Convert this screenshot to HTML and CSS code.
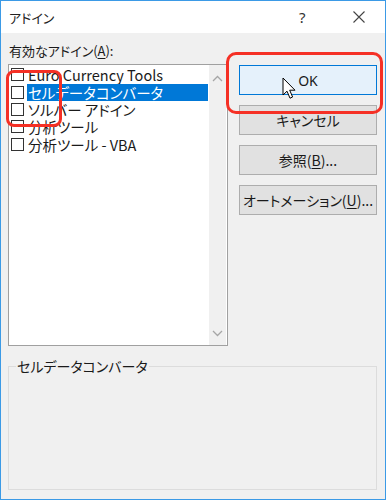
FILE: index.html
```html
<!DOCTYPE html>
<html lang="ja">
<head>
<meta charset="utf-8">
<title>アドイン</title>
<link rel="stylesheet" href="styles.css">
</head>
<body>
<div class="window">
  <div class="titlebar">
    <span class="title">アドイン</span>
    <span class="help">?</span>
    <span class="close">
      <svg width="12" height="12" viewBox="0 0 12 12"><path d="M0.5 0.5 L11.5 11.5 M11.5 0.5 L0.5 11.5" stroke="#444" stroke-width="1.1" fill="none"/></svg>
    </span>
  </div>
  <div class="body">
    <div class="top">
      <div class="left">
        <div class="label">有効なアドイン(<u>A</u>):</div>
        <div class="listbox">
          <ul class="items">
            <li class="item"><span class="check"></span><span class="text">Euro Currency Tools</span></li>
            <li class="item selected"><span class="check"></span><span class="text">セルデータコンバータ</span></li>
            <li class="item"><span class="check"></span><span class="text">ソルバー アドイン</span></li>
            <li class="item"><span class="check"></span><span class="text">分析ツール</span></li>
            <li class="item"><span class="check"></span><span class="text">分析ツール - VBA</span></li>
          </ul>
          <div class="scrollbar">
            <svg class="arrow" width="11" height="7" viewBox="0 0 11 7"><path d="M1 6 L5.5 1.5 L10 6" stroke="#a6a6a6" stroke-width="1.3" fill="none"/></svg>
            <svg class="arrow" width="11" height="7" viewBox="0 0 11 7"><path d="M1 1 L5.5 5.5 L10 1" stroke="#a6a6a6" stroke-width="1.3" fill="none"/></svg>
          </div>
        </div>
      </div>
      <div class="buttons">
        <div class="btn default">OK</div>
        <div class="btn">キャンセル</div>
        <div class="btn">参照(<u>B</u>)...</div>
        <div class="btn">オートメーション(<u>U</u>)...</div>
      </div>
    </div>
    <fieldset class="group">
      <legend class="legend">セルデータコンバータ</legend>
    </fieldset>
  </div>
  <div class="mark mark-checks"></div>
  <div class="mark mark-ok"></div>
  <svg class="cursor" width="15" height="23" viewBox="0 0 15 23"><path d="M1 1 L1 18 L5 14.2 L8 21.2 L10.6 20 L7.7 13.2 L13 13.2 Z" fill="#fff" stroke="#000" stroke-width="1" stroke-linejoin="round"/></svg>
</div>
</body>
</html>
```
FILE: styles.css
```css
* { box-sizing: border-box; }
html, body { margin: 0; padding: 0; }
body {
  width: 386px;
  height: 500px;
  overflow: hidden;
  font-family: "Noto Sans CJK JP", "Noto Sans", sans-serif;
  font-feature-settings: "palt";
  color: #1a1a1a;
}
.window {
  position: relative;
  width: 386px;
  height: 500px;
  border: 1px solid #3b9ae6;
  background: #f0f0f0;
  display: flex;
  flex-direction: column;
}
.titlebar {
  height: 32px;
  background: #fff;
  display: flex;
  align-items: center;
  padding-left: 8px;
  flex-shrink: 0;
}
.title {
  font-size: 13px;
  flex: 1;
  color: #222;
}
.help {
  font-size: 15px;
  color: #333;
  width: 12px;
  margin-right: 42px;
  font-family: "Noto Sans", sans-serif;
}
.close {
  display: flex;
  margin-right: 20px;
}
.body {
  flex: 1;
  padding: 9px 7px 0 7px;
  display: flex;
  flex-direction: column;
}
.top {
  display: flex;
  gap: 11px;
}
.left {
  width: 220px;
  display: flex;
  flex-direction: column;
}
.label {
  font-size: 13px;
  height: 22px;
  line-height: 18px;
  padding-left: 1px;
}
.label u, .btn u { text-decoration-thickness: 1px; text-underline-offset: 2px; }
.listbox {
  height: 282px;
  border: 1px solid #a0a0a0;
  background: #fff;
  display: flex;
}
.items {
  list-style: none;
  margin: 0;
  padding: 1px 0 0 0;
  flex: 1;
}
.item {
  height: 17.4px;
  display: flex;
  align-items: center;
  font-size: 14.5px;
}
.check {
  width: 13px;
  height: 13px;
  border: 1px solid #333;
  background: #fff;
  margin-left: 2px;
  flex-shrink: 0;
}
.text {
  margin-left: 3px;
  padding-left: 1px;
  height: 17px;
  line-height: 17px;
  flex: 1;
  margin-right: 1px;
  white-space: nowrap;
}
.selected .text {
  background: #0078d7;
  color: #fff;
}
.scrollbar {
  width: 17px;
  margin-right: 1px;
  background: #f0f0f0;
  display: flex;
  flex-direction: column;
  justify-content: space-between;
  align-items: center;
  padding: 10px 0 8px;
}
.buttons {
  display: flex;
  flex-direction: column;
  gap: 10px;
  padding-top: 23px;
}
.btn {
  width: 138px;
  height: 30px;
  background: #e1e1e1;
  border: 1px solid #adadad;
  display: flex;
  align-items: center;
  justify-content: center;
  font-size: 14px;
}
.btn.default {
  background: #e5f1fb;
  border-color: #0078d7;
  font-family: "Noto Sans", sans-serif;
}
.group {
  margin: 13px 0 0 0;
  height: 131px;
  width: 369px;
  border: 1px solid #dcdcdc;
  padding: 0 7px;
}
.legend {
  font-size: 14px;
  padding: 0 1px;
  line-height: 14px;
}
.mark {
  position: absolute;
  border: 3.5px solid #f53025;
  border-radius: 8px;
}
.mark-checks {
  left: 5px;
  top: 69px;
  width: 56px;
  height: 57px;
}
.mark-ok {
  left: 225px;
  top: 51px;
  width: 157px;
  height: 62px;
  border-radius: 10px;
}
.cursor {
  position: absolute;
  left: 281px;
  top: 76px;
}
```
